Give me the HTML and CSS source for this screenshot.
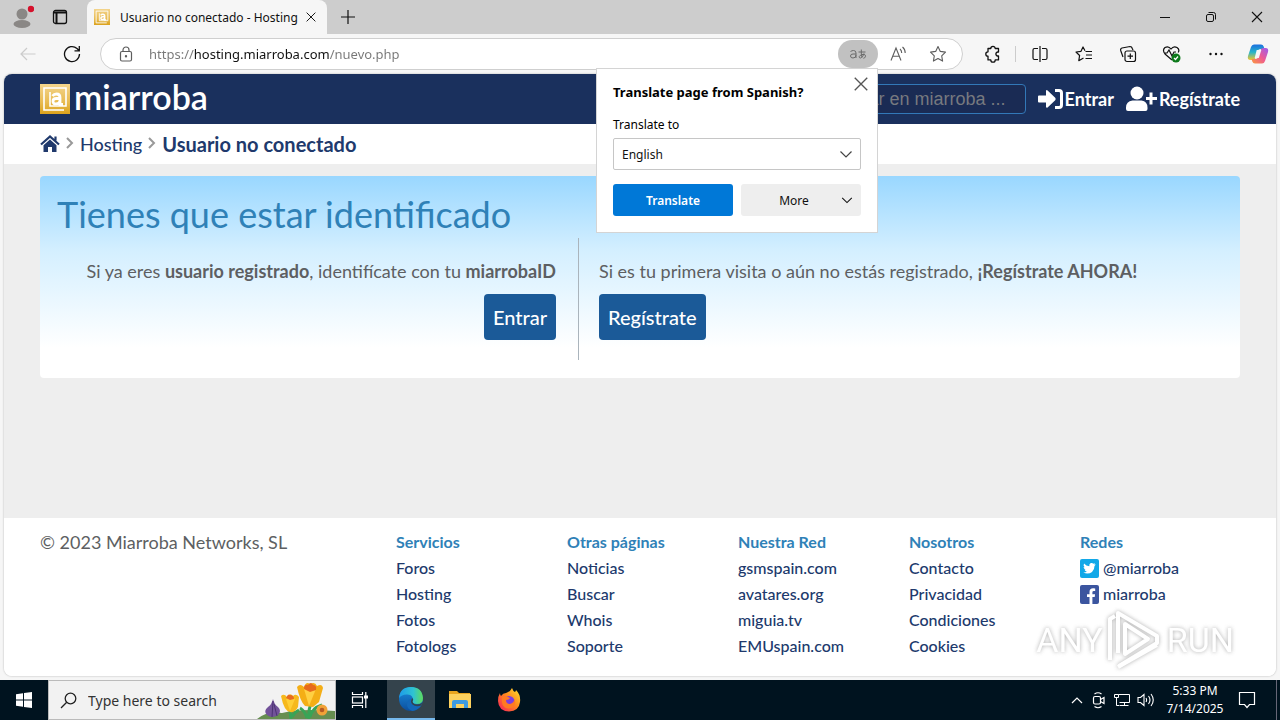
FILE: index.html
```html
<!DOCTYPE html>
<html lang="es">
<head>
<meta charset="utf-8">
<title>Usuario no conectado - Hosting</title>
<link rel="stylesheet" href="styles.css">
</head>
<body>
<svg class="defs" width="0" height="0" aria-hidden="true">
  <defs>
    <linearGradient id="gold" x1="0" y1="0" x2="0" y2="1"><stop offset="0" stop-color="#f3d48c"/><stop offset=".6" stop-color="#e8bb52"/><stop offset="1" stop-color="#dba21c"/></linearGradient>
    <linearGradient id="edgeA" x1="0" y1="0" x2="1" y2="0"><stop offset="0" stop-color="#1d9bea"/><stop offset=".6" stop-color="#2fc3d2"/><stop offset="1" stop-color="#5fdc5a"/></linearGradient>
    <linearGradient id="edgeB" x1="0" y1="0" x2="0" y2="1"><stop offset="0" stop-color="#1b8fe0"/><stop offset="1" stop-color="#0c4f9e"/></linearGradient>
    <linearGradient id="fire" x1="1" y1="0" x2="0" y2="1"><stop offset="0" stop-color="#ffe52e"/><stop offset=".45" stop-color="#ff8a1e"/><stop offset="1" stop-color="#f5195f"/></linearGradient>
    <linearGradient id="copA" x1="0" y1="0" x2="0" y2="1"><stop offset="0" stop-color="#1b6fe0"/><stop offset=".5" stop-color="#27b5c9"/><stop offset="1" stop-color="#f3c62c"/></linearGradient>
    <linearGradient id="copB" x1="1" y1="0" x2="0" y2="1"><stop offset="0" stop-color="#9a5cf0"/><stop offset=".5" stop-color="#ee5a92"/><stop offset="1" stop-color="#fb9a3d"/></linearGradient>
  </defs>
  <symbol id="at" viewBox="0 0 30 30">
    <rect width="30" height="30" fill="url(#gold)"/>
    <path d="M24 26H4V4h22v18H10V8" fill="none" stroke="#fff" stroke-width="1.600"/>
    <path d="M12.500 12q1.500-2 4-2 3.500 0 3.500 3.500V20.500h3M20 14.500h-3.500q-3.500 0-3.500 2.800t3 2.600q4 0 4-3.400" fill="none" stroke="#fff" stroke-width="2.800"/>
  </symbol>
  <symbol id="close" viewBox="0 0 16 16"><path d="M3 3l10 10M13 3L3 13" fill="none" stroke="currentColor" stroke-width="1.100"/></symbol>
  <symbol id="down" viewBox="0 0 16 16"><path d="M2.500 5.500L8 11l5.500-5.500" fill="none" stroke="currentColor" stroke-width="1.200"/></symbol>
</svg>

<header class="tabs">
  <button class="tab-tool" aria-label="Profile"><svg width="24" height="26" viewBox="0 0 24 26"><circle cx="12" cy="10" r="5.500" fill="#8a8785"/><ellipse cx="12" cy="20" rx="8.500" ry="4" fill="#8a8785"/><circle cx="21" cy="5" r="3.200" fill="#d5112c"/></svg></button>
  <button class="tab-tool" aria-label="Tab actions"><svg width="16" height="16" viewBox="0 0 16 16" fill="none" stroke="#111" stroke-width="1.300"><rect x="1.500" y="1.500" width="13" height="13" rx="2"/><path d="M1.500 3.500h13M4.500 4v10" stroke-width="2"/></svg></button>
  <div class="tab">
    <svg width="16" height="16"><use href="#at"/></svg>
    <span class="tab-name">Usuario no conectado - Hosting</span>
    <button aria-label="Close tab"><svg width="14" height="14"><use href="#close"/></svg></button>
  </div>
  <button class="tab-new" aria-label="New tab"><svg width="16" height="16" viewBox="0 0 16 16"><path d="M8 1v14M1 8h14" stroke="#111" stroke-width="1.200"/></svg></button>
  <div class="window-tools">
    <button aria-label="Minimize"><svg width="12" height="12" viewBox="0 0 12 12"><path d="M1 6.500h10" stroke="#111"/></svg></button>
    <button aria-label="Restore"><svg width="12" height="12" viewBox="0 0 12 12" fill="none" stroke="#111"><rect x="1.500" y="3.500" width="7" height="7" rx="1.500"/><path d="M3.500 1.500h5q2 0 2 2v5"/></svg></button>
    <button aria-label="Close window"><svg width="16" height="16"><use href="#close"/></svg></button>
  </div>
</header>

<nav class="toolbar">
  <button class="nav-button" aria-label="Back" disabled><svg width="16" height="16" viewBox="0 0 16 16" fill="none" stroke="#cbcbcb" stroke-width="1.200"><path d="M15.500 8H1M7 2L1 8l6 6"/></svg></button>
  <button class="nav-button" aria-label="Reload"><svg width="18" height="18" viewBox="0 0 18 18" fill="none" stroke="#111" stroke-width="1.300"><path d="M16.500 9A7.500 7.500 0 1 1 14 3.500L16 5.500M16.300 1v4.800h-4.800"/></svg></button>
  <div class="address">
    <svg width="14" height="16" viewBox="0 0 14 16" fill="none" stroke="#5d5d5d" stroke-width="1.200"><rect x="1.500" y="5.500" width="11" height="9.500" rx="1.500"/><path d="M4 5.500V4a3 3 0 0 1 6 0v1.500"/><circle cx="7" cy="10.300" r=".6" fill="#5d5d5d"/></svg>
    <input class="url" aria-label="Address" value="https://hosting.miarroba.com/nuevo.php">
    <div class="translate-anchor">
      <button class="translate-button" aria-label="Translate page"><svg width="20" height="16" viewBox="0 0 20 16" fill="none" stroke="#6b6b6b"><path d="M2.500 5.500Q4 4.500 5.500 4.500q2.500 0 2.500 2.500v5M8 8H5Q2.500 8 2.500 10t2.500 2q3 0 3-3M10.500 6h7M13.300 3.500q-.3 6 .8 8M16 7.500q-.8 3.500-3.500 4.500-1.500 0-1.300-1.400Q12.500 8 16 8.300q2 .6 1.400 2.500-.5 1.300-2 1.500"/></svg></button>
      <section class="popup" aria-label="Translate">
        <div class="popup-head"><h2>Translate page from Spanish?</h2><button aria-label="Close"><svg width="20" height="20"><use href="#close"/></svg></button></div>
        <label for="lang">Translate to</label>
        <div class="select-wrap"><select id="lang"><option>English</option></select><svg width="16" height="16"><use href="#down"/></svg></div>
        <div class="popup-actions"><button class="primary">Translate</button><button class="more"><span>More</span><svg width="14" height="14"><use href="#down"/></svg></button></div>
      </section>
    </div>
    <button class="field-tool" aria-label="Read aloud"><svg width="18" height="16" viewBox="0 0 18 16" fill="none" stroke="#5d5d5d" stroke-width="1.100"><path d="M2 14.500L7 2l5 12.500M3.800 10.300h6.400M11 3q1.700 1.500 1.700 4M13.500 1q2.700 2.200 2.700 6" /></svg></button>
    <button class="field-tool" aria-label="Favorite"><svg width="18" height="18" viewBox="0 0 18 18" fill="none" stroke="#5d5d5d" stroke-width="1.100" stroke-linejoin="round"><path d="M9 1.500l2.300 4.900 5.200.7-3.800 3.700.9 5.300L9 13.500l-4.600 2.600.9-5.300L1.500 7.100l5.200-.7z"/></svg></button>
  </div>
  <div class="tools">
    <button aria-label="Extensions"><svg width="18" height="18" viewBox="0 0 18 18" fill="none" stroke="#111" stroke-width="1.300" stroke-linejoin="round"><path d="M4 3.500h2.800a2.200 2.200 0 1 1 4.400 0H14.500v3.600a2 2 0 1 0 0 3.800v4h-3.300a2.200 2.200 0 0 1-4.400 0H4V11.200a2.200 2.200 0 1 1 0-4.400z"/></svg></button>
    <span class="divider"></span>
    <button aria-label="Split screen"><svg width="18" height="18" viewBox="0 0 18 18" fill="none" stroke="#111" stroke-width="1.200"><path d="M7 3.500H3.500Q2 3.500 2 5v8q0 1.500 1.500 1.500H7M11 3.500h3.500Q16 3.500 16 5v8q0 1.500-1.500 1.500H11M9 1v16"/></svg></button>
    <button aria-label="Favorites"><svg width="18" height="18" viewBox="0 0 18 18" fill="none" stroke="#111" stroke-width="1.200" stroke-linejoin="round"><path d="M10 5.800L8 2 6 6.300l-5 .7 3.600 3.500-.8 5.200L8.500 13M10.500 6.500H17M11 10h6M10.500 13.500H17"/></svg></button>
    <button aria-label="Collections"><svg width="18" height="18" viewBox="0 0 18 18" fill="none" stroke="#111" stroke-width="1.200"><rect x="6" y="6" width="10.500" height="10.500" rx="2"/><path d="M11.300 8.500v5.500M8.500 11.200H14M4 12L1.700 5.500Q1.200 3.500 3 3l8-1.500q1.800 0 2.300 2L14 5"/></svg></button>
    <button aria-label="Browser essentials"><svg width="20" height="18" viewBox="0 0 20 18" fill="none" stroke="#111" stroke-width="1.200"><path d="M10 15L3 9Q0 5 3 2.500q3.500-2 6 1.500 2.500-3.500 6-1.500 3 2 1.200 5M2 8h3l2-3 3 6 2-4h2"/><circle cx="14" cy="13" r="4.500" fill="#0d7a1b" stroke="none"/><path d="M12 13l1.500 1.500 2.500-3" stroke="#fff"/></svg></button>
    <button aria-label="Settings"><svg width="16" height="16" viewBox="0 0 16 16" fill="#111"><circle cx="2.500" cy="8" r="1.200"/><circle cx="8" cy="8" r="1.200"/><circle cx="13.500" cy="8" r="1.200"/></svg></button>
    <button class="copilot" aria-label="Copilot"><svg width="22" height="22" viewBox="0 0 22 22"><path d="M7 1.500h7q2 0 2.700 2L17.500 6h-4q-2 0-2.700 2L8.500 15q-.7 2-3 2H3.500Q0 17 1 13L4 4q.8-2.500 3-2.500z" fill="url(#copA)"/><path d="M15 20.500H8q-2 0-2.700-2L4.500 16h4q2 0 2.700-2L13.500 7q.7-2 3-2h2Q22 5 21 9l-3 9q-.8 2.500-3 2.500z" fill="url(#copB)"/><path d="M9.700 7h4.600l-2.500 8H7.700z" fill="#f6f6f6"/></svg></button>
  </div>
</nav>

<div class="page">
  <div class="site-head">
    <a class="logo" href="#"><svg width="30" height="30"><use href="#at"/></svg><span>miarroba</span></a>
    <input class="search" type="text" aria-label="Buscar" placeholder="Buscar en miarroba ...">
    <a class="account" href="#"><svg width="26" height="24" viewBox="0 0 26 24"><path d="M1 8.500h7V4.300q0-2 1.600-.8l7.600 7.300q1 1.200 0 2.400l-7.600 7.200q-1.600 1-1.600-.8v-4.100H1q-1 0-1-1v-5q0-1 1-1z" fill="#fff"/><path d="M17 3.500h4q2.500 0 2.500 2.500v12q0 2.500-2.500 2.500h-4" fill="none" stroke="#fff" stroke-width="3"/></svg>Entrar</a>
    <a class="account" href="#"><svg width="32" height="26" viewBox="0 0 32 26" fill="#fff"><circle cx="11" cy="7" r="6.500"/><path d="M6.500 14.500h9q6 1 6 7V23q0 2-2 2H2q-2 0-2-2v-1.500q0-6 6.500-7zM23.500 6.500h3V11H31v3h-4.500v4.500h-3V14H20v-3h3.500z"/></svg>Regístrate</a>
  </div>
  <nav class="crumbs" aria-label="Ruta">
    <a href="#" aria-label="Inicio"><svg width="20" height="18" viewBox="0 0 20 18"><path d="M1 9.500l9-8 9 8M15.500 1.500v4" fill="none" stroke="#20396c" stroke-width="2.200"/><path d="M3.500 10.300L10 4.600l6.500 5.700V17H12v-5H8v5H3.500z" fill="#20396c"/></svg></a>
    <svg width="8" height="14" viewBox="0 0 8 14"><path d="M1 1l5 5-5 5" fill="none" stroke="#999" stroke-width="2"/></svg>
    <a href="#">Hosting</a>
    <svg width="8" height="14" viewBox="0 0 8 14"><path d="M1 1l5 5-5 5" fill="none" stroke="#999" stroke-width="2"/></svg>
    <strong>Usuario no conectado</strong>
  </nav>
  <main>
    <section class="card">
      <h1>Tienes que estar identificado</h1>
      <div class="choices">
        <div class="choice login"><p>Si ya eres <b>usuario registrado</b>, identifícate con tu <b>miarrobaID</b></p><button>Entrar</button></div>
        <div class="choice"><p>Si es tu primera visita o aún no estás registrado, <b>¡Regístrate AHORA!</b></p><button>Regístrate</button></div>
      </div>
    </section>
  </main>
  <footer class="site-foot">
    <p>© 2023 Miarroba Networks, SL</p>
    <div class="links"><h3>Servicios</h3><a href="#">Foros</a><a href="#">Hosting</a><a href="#">Fotos</a><a href="#">Fotologs</a></div>
    <div class="links"><h3>Otras páginas</h3><a href="#">Noticias</a><a href="#">Buscar</a><a href="#">Whois</a><a href="#">Soporte</a></div>
    <div class="links"><h3>Nuestra Red</h3><a href="#">gsmspain.com</a><a href="#">avatares.org</a><a href="#">miguia.tv</a><a href="#">EMUspain.com</a></div>
    <div class="links"><h3>Nosotros</h3><a href="#">Contacto</a><a href="#">Privacidad</a><a href="#">Condiciones</a><a href="#">Cookies</a></div>
    <div class="links"><h3>Redes</h3>
      <a href="#"><svg width="19" height="19" viewBox="0 0 19 19"><rect width="19" height="19" rx="2" fill="#12a8e8"/><path d="M15.800 5.600l-1.300 1.300q0 3.900-2.500 6-3.600 2.900-8.800.7 2.400.1 3.700-1-1.800-.3-2.400-1.900h1.100Q3.600 9.900 3.500 8l1.100.3Q2.900 6.600 4 4.600q2.200 2.600 5.300 2.700Q8.900 4.900 10.800 4.100q1.600-.4 2.700.7l1.700-.6-1 1.400z" fill="#fff"/></svg>@miarroba</a>
      <a href="#"><svg width="19" height="19" viewBox="0 0 19 19"><rect width="19" height="19" rx="2" fill="#3b559f"/><path d="M9.500 19v-7H7V9.200h2.500V7q0-3.700 3.700-3.700l2 .2v2.400h-1.400q-1.400 0-1.400 1.400v1.900h2.700l-.4 2.800h-2.300v7z" fill="#fff"/></svg>miarroba</a>
    </div>
  </footer>
</div>

<footer class="taskbar">
  <button class="start" aria-label="Start"><svg width="16" height="16" viewBox="0 0 16 16" fill="#fff"><path d="M0 2.200l7-1v6.300H0zM8 1l8-1v7.500H8zM0 8.500h7v6.300l-7-1zM8 8.500h8V16l-8-1z"/></svg></button>
  <div class="task-search">
    <svg width="17" height="17" viewBox="0 0 17 17" fill="none" stroke="#222" stroke-width="1.300"><circle cx="10.500" cy="6.500" r="5.300"/><path d="M6.700 10.300L1 16"/></svg>
    <input type="text" aria-label="Search" placeholder="Type here to search">
    <svg width="78" height="38" viewBox="0 0 78 38">
      <path d="M0 38Q10 30 25 32q18-5 53-2v8z" fill="#668e50"/>
      <path d="M16 18q1 5 5 8 4 4 0 8-6 4-11 0-4-4 1-8 4-3 5-8z" fill="#72529a"/><path d="M16 20l-1 16M17 23l3 12" stroke="#4b3272"/>
      <path d="M34 38q-1-7-1-12M52 38q-1-8 2-16M35 36q3-5 7-7M50 37q-2-7-7-10M53 36q2-9 12-12" fill="none" stroke="#39a456" stroke-width="3"/>
      <path d="M24 15q3-3 6 1 3-5 6-1 3-3 6 1l-1 10q-3 6-8 5-6-1-9-16z" fill="#f6b91c"/><path d="M29 18l4 12 5-12-4-2z" fill="#ffcf35"/><path d="M29 17q2-5 4-3 4 0 4 4l-4 1z" fill="#e86b20"/>
      <path d="M40 6q3-4 7 0 2-6 6-3 5-3 7 2 5-3 6 2l-4 14-6 5-8-1q-5-5-8-19z" fill="#f4ae16"/><path d="M47 8l5 17 7-17-6-2z" fill="#ffd042"/><path d="M47 8q0-5 4-4 3-4 5 0 4 0 3 5l-6 2z" fill="#e76b1c"/>
      <circle cx="65" cy="29" r="5.500" fill="#f1a238"/><circle cx="65" cy="29" r="2.300" fill="#b65a22"/>
    </svg>
  </div>
  <button class="app" aria-label="Task view"><svg width="18" height="18" viewBox="0 0 18 18" fill="none" stroke="#fff" stroke-width="1.200"><path d="M1.500 1v2.500h10V1M1.500 17v-2.500h10V17M14.800 1v16"/><rect x="1.500" y="6" width="10" height="6"/><path d="M13 6h4" stroke-width="3"/></svg></button>
  <button class="app active" aria-label="Edge"><svg width="26" height="26" viewBox="0 0 26 26"><circle cx="13" cy="13" r="12" fill="url(#edgeB)"/><path d="M1 12Q2 1 13 1q11 0 12 11 0 6-6 6-5 0-4.500-3 1.500-6-5-6.500Q4 8 1 12z" fill="url(#edgeA)"/><path d="M14.500 12q-3 4 1 7 4 2 8 0-3 5-9 6-6-2-5.500-7 1-5 5.500-6z" fill="#1367b8"/><path d="M14.500 12q1.500 1.500 0 3.500 1 3.500 5 3 3 0 5-2l-1.500 3q-5 2-8.500-1-3-3 0-6.500z" fill="#34434c"/></svg></button>
  <button class="app" aria-label="File Explorer"><svg width="22" height="20" viewBox="0 0 22 20"><path d="M0 1h8l2 2h11v5H0z" fill="#e9a51f"/><path d="M0 4h22v14H0z" fill="#fdd15e"/><path d="M3 18v-6q0-2 2-2h12q2 0 2 2v6h-4v-4H7v4z" fill="#3f9be0"/></svg></button>
  <button class="app" aria-label="Firefox"><svg width="24" height="24" viewBox="0 0 24 24"><path d="M3 5q0 2 1 3 2-3 5-3 4-1 6-5 1 3 3 4 1-1 1-2 5 5 4 12-1 9-11 9.500Q1.500 23 1 13q0-5 2-8z" fill="url(#fire)"/><circle cx="12" cy="13.500" r="5.500" fill="#7b3ee0"/><path d="M5 9q3-2 6 0l2 1q-1 2-4 2 0 4 4 4 4-1 4.500-5 2 6-2 8.500-7 3-10-3-1-4-.5-7.500z" fill="#ff7a22"/></svg></button>
  <div class="tray">
    <svg width="12" height="12" viewBox="0 0 12 12"><path d="M1 9l5-5 5 5" fill="none" stroke="#fff" stroke-width="1.200"/></svg>
    <svg width="18" height="18" viewBox="0 0 18 18" fill="none" stroke="#fff" stroke-width="1.200"><rect x="4.500" y="5.500" width="7" height="7.500" rx="1.500"/><path d="M11.500 8.500L15 6.500v6l-3.500-2M5.500 3q3.500-2.500 7 0M5.500 15.500q3.500 2.500 7 0"/></svg>
    <svg width="18" height="16" viewBox="0 0 18 16" fill="none" stroke="#fff"><path d="M5.500 2.500h11v8h-10M11.500 10.500v3M7 13.500h8.500"/><path d="M1.500 2.500h4v3h-4zM3.500 5.500v8h3"/></svg>
    <svg width="18" height="16" viewBox="0 0 18 16" fill="none" stroke="#fff" stroke-width="1.100"><path d="M1 5.500h2.500L7 2.500v11l-3.500-3H1zM9 6q1.200 2 0 4M11.500 4q3 4 0 8M14 2q4.500 6 0 12"/></svg>
    <div class="clock"><span>5:33 PM</span><span>7/14/2025</span></div>
    <svg width="18" height="18" viewBox="0 0 18 18" fill="none" stroke="#fff" stroke-width="1.200"><path d="M1.500 1.500h15v12h-5L9 16.500 6.500 13.500h-5z"/></svg>
    <span class="show-desktop"></span>
  </div>
</footer>

<div class="watermark" aria-hidden="true"><span>ANY</span><svg width="60" height="64" viewBox="0 0 60 64" fill="none" stroke="#fff" stroke-width="4" stroke-linejoin="round"><path d="M13 45V5l39 23v7L14 58"/><path d="M20 16l23 15-23 15zM5 52V11l5-3M13 59L52 37"/></svg><span>RUN</span></div>
</body>
</html>
```
FILE: styles.css
```css
* { box-sizing: border-box; }
body {
  margin: 0;
  height: 100vh;
  display: flex;
  flex-direction: column;
  background: #f6f6f6;
  font-family: "Noto Sans", sans-serif;
  font-size: 12px;
  color: #111;
  position: relative;
  overflow: hidden;
}
.defs { position: absolute; }
svg { flex: none; display: block; }
button {
  border: 0;
  padding: 0;
  background: none;
  font: inherit;
  color: inherit;
  display: flex;
  align-items: center;
  justify-content: center;
}
input, select { font: inherit; border: 0; outline: 0; padding: 0; min-width: 0; }
a { color: inherit; text-decoration: none; }
h1, h2, h3, p { margin: 0; }

.tabs { height: 34px; flex: none; display: flex; background: #cdcdcd; }
.tab-tool { width: 38px; margin-left: 3px; }
.tab-tool + .tab-tool { margin-left: 0; }
.tab {
  width: 240px;
  margin-left: 8px;
  padding: 0 9px 0 7px;
  display: flex;
  align-items: center;
  gap: 10px;
  background: #f6f6f6;
  border-radius: 8px 8px 0 0;
}
.tab-name { flex: 1; min-width: 0; white-space: nowrap; }
.tab-new { width: 42px; }
.window-tools { margin-left: auto; display: flex; }
.window-tools button { width: 46px; }

.toolbar { height: 40px; flex: none; display: flex; align-items: center; padding-left: 6px; }
.nav-button { width: 44px; height: 32px; }
.address {
  width: 863px;
  flex: 0 1 auto;
  height: 32px;
  margin-left: 6px;
  padding: 0 4px 0 18px;
  display: flex;
  align-items: center;
  background: #fff;
  border: 1px solid #cfcfcf;
  border-radius: 16px;
}
.url {
  flex: 1;
  margin-left: 16px;
  font-size: 13px;
  color: transparent;
  background: linear-gradient(90deg, #777 45px, #111 45px, #111 180px, #777 180px);
  background-clip: text;
  -webkit-background-clip: text;
}
.translate-anchor { position: relative; }
.translate-button { width: 40px; height: 28px; border-radius: 14px; background: #c1c1c1; }
.field-tool { width: 40px; height: 28px; }
.tools { flex: 1; display: flex; align-items: center; justify-content: flex-end; padding-right: 2px; }
.tools button { width: 44px; height: 32px; }
.tools .copilot { width: 40px; }
.divider { width: 1px; height: 16px; margin-right: 2px; background: #ccc; }

.popup {
  position: absolute;
  z-index: 2;
  top: 100%;
  right: 0;
  width: 282px;
  padding: 7px 16px 16px;
  background: #fff;
  border: 1px solid #d4d4d4;
}
.popup-head { display: flex; justify-content: space-between; }
.popup-head h2 { padding-top: 7px; font-size: 13px; line-height: 18px; white-space: nowrap; color: #000; }
.popup-head button { margin-right: -8px; width: 16px; height: 16px; color: #555; }
.popup label { display: block; margin: 16px 0 5px; line-height: 16px; color: #000; }
.select-wrap { position: relative; }
.select-wrap select {
  width: 100%;
  height: 32px;
  padding: 0 8px;
  appearance: none;
  border: 1px solid #c6c6c6;
  border-radius: 2px;
  background: #fff;
  color: #111;
}
.select-wrap svg { position: absolute; right: 7px; top: 8px; color: #444; pointer-events: none; }
.popup-actions { display: grid; grid-template-columns: 1fr 1fr; gap: 8px; margin-top: 14px; }
.popup-actions button { height: 32px; border-radius: 3px; }
.primary { background: #0078d7; color: #fff; font-weight: 600; }
.popup-actions .more { padding: 0 7px; background: #eee; }
.more span { flex: 1; }

.page {
  flex: 1;
  min-height: 0;
  margin: 0 4px 4px;
  display: flex;
  flex-direction: column;
  overflow: hidden;
  background: #fff;
  border-radius: 8px;
  box-shadow: 0 0 2px #aaa;
  font-family: Lato, sans-serif;
  color: #5d5f62;
}
.site-head {
  height: 50px;
  flex: none;
  padding: 0 36px;
  display: flex;
  align-items: center;
  gap: 12px;
  background: #1a305d;
  color: #fff;
}
.logo { display: flex; align-items: center; gap: 4px; margin-right: auto; font-size: 34px; line-height: 40px; font-weight: 600; }
.logo span { padding-bottom: 4px; }
.search {
  width: 214px;
  height: 30px;
  padding: 0 16px;
  border: 1px solid #3278b8;
  border-radius: 4px;
  background: #1a2b54;
  font-family: "Liberation Sans", sans-serif;
  font-size: 18px;
}
.search::placeholder { color: #77797f; }
.account { display: flex; align-items: center; gap: 1px; font-size: 18px; font-weight: 700; }
.crumbs {
  height: 40px;
  flex: none;
  padding: 0 36px;
  display: flex;
  align-items: center;
  gap: 6px;
  font-size: 18px;
  font-weight: 500;
  color: #20396c;
}
.crumbs strong { font-size: 20px; font-weight: 700; }
main { flex: 1; padding: 12px 36px; background: #eee; }
.card {
  padding: 14px 0 18px;
  border-radius: 4px;
  background: linear-gradient(#99d7ff, #d4efff 37%, #fff 85%);
}
h1 { padding: 0 17px; font-size: 36px; line-height: 48px; font-weight: 400; color: #2f81b7; }
.choices { display: grid; grid-template-columns: 539fr 661fr; }
.choice { padding: 20px 20px; display: flex; flex-direction: column; align-items: flex-start; gap: 10px; }
.choice.login { align-items: flex-end; padding-right: 22px; border-right: 1px solid #aab4bc; }
.choice p { font-size: 18px; line-height: 26px; white-space: nowrap; }
.choice button { height: 46px; padding: 0 9px; border-radius: 4px; background: #1b5a98; color: #fff; font-size: 20px; font-weight: 500; }
.site-foot {
  flex: none;
  height: 158px;
  padding: 11px 36px 0;
  display: grid;
  grid-template-columns: 345fr repeat(5, 160fr);
  column-gap: 11px;
  background: #fff;
}
.site-foot p { font-size: 18px; line-height: 26px; white-space: nowrap; }
.links { display: flex; flex-direction: column; font-size: 16px; line-height: 26px; font-weight: 500; color: #20396c; }
.links h3 { font-size: 16px; line-height: 26px; font-weight: 700; color: #2f81b7; }
.links a { display: flex; align-items: center; gap: 4px; }

.taskbar { height: 40px; flex: none; display: flex; background: #00131f; color: #fff; }
.start { width: 48px; }
.task-search {
  width: 288px;
  padding-left: 11px;
  display: flex;
  align-items: center;
  gap: 11px;
  background: #f2f2f2;
  border: 1px solid #bbb;
}
.task-search input { flex: 1; background: none; font-size: 14px; }
.task-search input::placeholder { color: #333; }
.app { width: 48px; margin-right: 1px; }
.task-search + .app { margin-right: 3px; }
.app.active { background: #34434c; border-bottom: 2px solid #76b9ed; }
.tray { margin-left: auto; display: flex; align-items: center; gap: 6px; }
.clock { width: 60px; margin: 0 4px; display: flex; flex-direction: column; align-items: center; line-height: 18px; }
.tray .clock + svg { margin-left: 3px; }
.show-desktop { align-self: stretch; width: 1px; margin: 0 3px 0 14px; background: #667; }

.watermark {
  position: absolute;
  right: 46px;
  bottom: 48px;
  z-index: 1;
  display: flex;
  align-items: center;
  gap: 2px;
  font-family: Roboto, sans-serif;
  font-size: 34px;
  line-height: 48px;
  color: #fff;
  filter: drop-shadow(0 0 2px #999);
  opacity: .8;
  pointer-events: none;
}
```
